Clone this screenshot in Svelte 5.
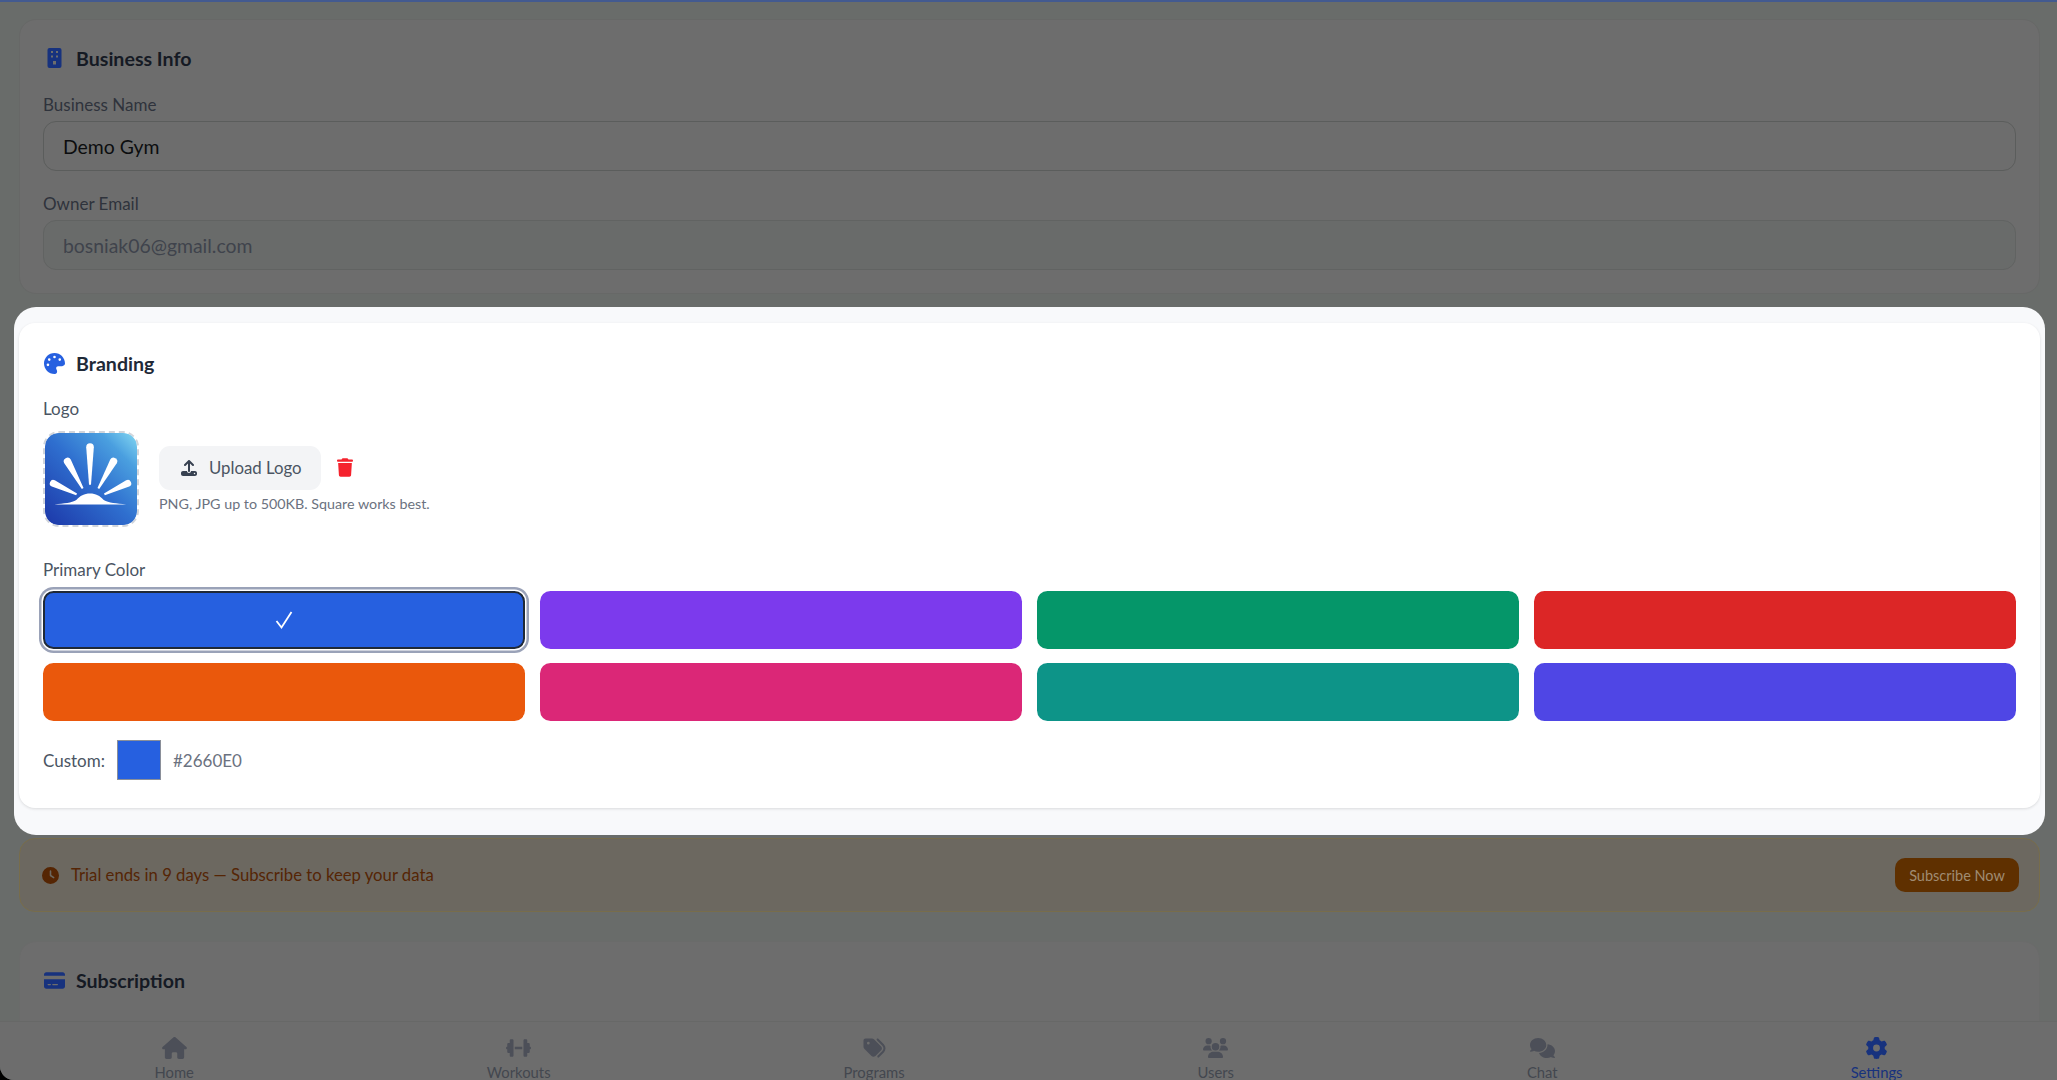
<script lang="ts">
	const swatches = ['#2660e0', '#7c3aed', '#059669', '#dc2626', '#ea580c', '#db2777', '#0d9488', '#4f46e5'];

	const navItems = [
		{
			label: 'Home',
			box: '0 0 576 512',
			d: 'M575.8 255.5c0 18-15 32.1-32 32.1h-32l.7 160.2c0 2.7-.2 5.4-.5 8.1V472c0 22.1-17.9 40-40 40H456c-1.1 0-2.2 0-3.3-.1c-1.4 .1-2.8 .1-4.2 .1H416 392c-22.1 0-40-17.9-40-40V448 384c0-17.7-14.3-32-32-32H256c-17.7 0-32 14.3-32 32v64 24c0 22.1-17.9 40-40 40H160 128.1c-1.5 0-3-.1-4.5-.2c-1.2 .1-2.4 .2-3.6 .2H104c-22.1 0-40-17.9-40-40V360c0-.9 0-1.9 .1-2.8V287.6H32c-18 0-32-14-32-32.1c0-9 3-17 10-24L266.4 8c7-7 15-8 22-8s15 2 21 7L564.8 231.5c8 7 12 15 11 24z'
		},
		{
			label: 'Workouts',
			box: '0 0 640 512',
			d: 'M96 64c0-17.7 14.3-32 32-32h32c17.7 0 32 14.3 32 32V224v64V448c0 17.7-14.3 32-32 32H128c-17.7 0-32-14.3-32-32V384H64c-17.7 0-32-14.3-32-32V288c-17.7 0-32-14.3-32-32s14.3-32 32-32V160c0-17.7 14.3-32 32-32H96V64zm448 0v64h32c17.7 0 32 14.3 32 32v64c17.7 0 32 14.3 32 32s-14.3 32-32 32v64c0 17.7-14.3 32-32 32H544v64c0 17.7-14.3 32-32 32H480c-17.7 0-32-14.3-32-32V288 224 64c0-17.7 14.3-32 32-32h32c17.7 0 32 14.3 32 32zM416 224v64H224V224H416z'
		},
		{
			label: 'Programs',
			box: '0 0 512 512',
			d: 'M345 39.1L472.8 168.4c52.4 53 52.4 138.2 0 191.2L360.8 472.9c-9.3 9.4-24.5 9.5-33.9 .2s-9.5-24.5-.2-33.9L438.6 325.9c33.9-34.3 33.9-89.4 0-123.7L310.9 72.9c-9.3-9.4-9.2-24.6 .2-33.9s24.6-9.2 33.9 .2zM0 229.5V80C0 53.5 21.5 32 48 32H197.5c17 0 33.3 6.7 45.3 18.7l168 168c25 25 25 65.5 0 90.5L277.3 442.7c-25 25-65.5 25-90.5 0l-168-168C6.7 262.7 0 246.5 0 229.5zM144 144a32 32 0 1 0 -64 0 32 32 0 1 0 64 0z'
		},
		{
			label: 'Users',
			box: '0 0 640 512',
			d: 'M144 0a80 80 0 1 1 0 160A80 80 0 1 1 144 0zM512 0a80 80 0 1 1 0 160A80 80 0 1 1 512 0zM0 298.7C0 239.8 47.8 192 106.7 192h42.7c15.9 0 31 3.5 44.6 9.7c-1.3 7.2-1.9 14.7-1.9 22.3c0 38.2 16.8 72.5 43.3 96c-.2 0-.4 0-.7 0H21.3C9.6 320 0 310.4 0 298.7zM405.3 320c-.2 0-.4 0-.7 0c26.6-23.5 43.3-57.8 43.3-96c0-7.6-.7-15-1.9-22.3c13.6-6.3 28.7-9.7 44.6-9.7h42.7C592.2 192 640 239.8 640 298.7c0 11.8-9.6 21.3-21.3 21.3H405.3zM224 224a96 96 0 1 1 192 0 96 96 0 1 1 -192 0zM128 485.3C128 411.7 187.7 352 261.3 352H378.7C452.3 352 512 411.7 512 485.3c0 14.7-11.9 26.7-26.7 26.7H154.7c-14.7 0-26.7-11.9-26.7-26.7z'
		},
		{
			label: 'Chat',
			box: '0 0 640 512',
			d: 'M208 352c114.9 0 208-78.8 208-176S322.9 0 208 0S0 78.8 0 176c0 38.6 14.7 74.3 39.6 103.4c-3.5 9.4-8.7 17.7-14.2 24.7c-4.8 6.2-9.7 11-13.3 14.3c-1.8 1.6-3.3 2.9-4.3 3.7c-.5 .4-.9 .7-1.1 .8l-.2 .2 0 0 0 0C1 327.2-1.4 334.4 .8 340.9S9.1 352 16 352c21.8 0 43.8-5.6 62.1-12.5c9.2-3.5 17.8-7.4 25.3-11.4C134.1 343.3 169.8 352 208 352zM448 176c0 112.3-99.1 196.9-216.5 207C255.8 457.7 336.1 512 432 512c38.2 0 73.9-8.7 104.7-23.9c7.5 4 16 7.9 25.2 11.4c18.3 6.9 40.3 12.5 62.1 12.5c6.9 0 13.1-4.5 15.2-11.1c2.1-6.6-.2-13.8-5.8-17.9l0 0 0 0-.2-.2c-.2-.2-.6-.4-1.1-.8c-1-.8-2.5-2-4.3-3.7c-3.6-3.3-8.5-8.1-13.3-14.3c-5.5-7-10.7-15.4-14.2-24.7c24.9-29 39.6-64.7 39.6-103.4c0-92.8-84.9-168.9-192.6-175.5c.4 5.1 .6 10.3 .6 15.5z'
		},
		{
			label: 'Settings',
			active: true,
			box: '0 0 512 512',
			d: 'M495.9 166.6c3.2 8.7 .5 18.4-6.4 24.6l-43.3 39.4c1.1 8.3 1.7 16.8 1.7 25.4s-.6 17.1-1.7 25.4l43.3 39.4c6.9 6.2 9.6 15.9 6.4 24.6c-4.4 11.9-9.7 23.3-15.8 34.3l-4.7 8.1c-6.6 11-14 21.4-22.1 31.2c-5.9 7.2-15.7 9.6-24.5 6.8l-55.7-17.7c-13.4 10.3-28.2 18.9-44 25.4l-12.5 57.1c-2 9.1-9 16.3-18.2 17.8c-13.8 2.3-28 3.5-42.5 3.5s-28.7-1.2-42.5-3.5c-9.2-1.5-16.2-8.7-18.2-17.8l-12.5-57.1c-15.8-6.5-30.6-15.1-44-25.4L83.1 425.9c-8.8 2.8-18.6 .3-24.5-6.8c-8.1-9.8-15.5-20.2-22.1-31.2l-4.7-8.1c-6.1-11-11.4-22.4-15.8-34.3c-3.2-8.7-.5-18.4 6.4-24.6l43.3-39.4C64.6 273.1 64 264.6 64 256s.6-17.1 1.7-25.4L22.4 191.2c-6.9-6.2-9.6-15.9-6.4-24.6c4.4-11.9 9.7-23.3 15.8-34.3l4.7-8.1c6.6-11 14-21.4 22.1-31.2c5.9-7.2 15.7-9.6 24.5-6.8l55.7 17.7c13.4-10.3 28.2-18.9 44-25.4l12.5-57.1c2-9.1 9-16.3 18.2-17.8C227.3 1.2 241.5 0 256 0s28.7 1.2 42.5 3.5c9.2 1.5 16.2 8.7 18.2 17.8l12.5 57.1c15.8 6.5 30.6 15.1 44 25.4l55.7-17.7c8.8-2.8 18.6-.3 24.5 6.8c8.1 9.8 15.5 20.2 22.1 31.2l4.7 8.1c6.1 11 11.4 22.4 15.8 34.3zM256 336a80 80 0 1 0 0-160 80 80 0 1 0 0 160z'
		}
	];

	// tapered ray: wide rounded head at (x1,y1), narrow foot at (x2,y2)
	function ray(x1: number, y1: number, x2: number, y2: number, w: number) {
		const len = Math.hypot(x2 - x1, y2 - y1);
		const nx = (-(y2 - y1) / len) * w;
		const ny = ((x2 - x1) / len) * w;
		const fx = (-(y2 - y1) / len) * 1;
		const fy = ((x2 - x1) / len) * 1;
		return `M${x1 + nx} ${y1 + ny}A${w} ${w} 0 0 1 ${x1 - nx} ${y1 - ny}L${x2 - fx} ${y2 - fy}L${x2 + fx} ${y2 + fy}Z`;
	}

	const rays = [
		ray(46, 14.5, 46, 53, 3.9),
		ray(23, 29, 38.5, 56.7, 3.8),
		ray(70, 29, 54.5, 56.7, 3.8),
		ray(8.5, 51.5, 32.3, 62.7, 3.6),
		ray(84.5, 51.5, 60.7, 62.7, 3.6)
	];
</script>

<div class="page">
	<div class="topline"></div>

	<main class="content">
		<section class="card first">
			<h2 class="title">
				<svg class="title-icon building" viewBox="0 0 14 20" aria-hidden="true">
					<path fill-rule="evenodd" d="M2 0h10a2 2 0 0 1 2 2v16a2 2 0 0 1-2 2H2a2 2 0 0 1-2-2V2a2 2 0 0 1 2-2zM3.5 3v2h2V3zm5 0v2h2V3zm-5 4.5v2h2v-2zm5 0v2h2v-2zM5.5 13v3.5h3V13z" />
				</svg>
				Business Info
			</h2>
			<div class="field">
				<span class="label">Business Name</span>
				<div class="input">Demo Gym</div>
			</div>
			<div class="field">
				<span class="label">Owner Email</span>
				<div class="input readonly">bosniak06@gmail.com</div>
			</div>
		</section>

		<div class="spotlight">
			<section class="card branding">
				<h2 class="title">
					<svg class="title-icon palette" viewBox="0 0 512 512" aria-hidden="true">
						<path d="M512 256c0 .9 0 1.8 0 2.7c-.4 36.5-33.6 61.3-70.1 61.3H344c-26.5 0-48 21.5-48 48c0 3.4 .4 6.7 1 9.9c2.1 10.2 6.5 20 10.8 29.9c6.1 13.8 12.1 27.5 12.1 42c0 31.8-21.6 60.7-53.4 62c-3.5 .1-7 .2-10.6 .2C114.6 512 0 397.4 0 256S114.6 0 256 0S512 114.6 512 256zM128 288a32 32 0 1 0 -64 0 32 32 0 1 0 64 0zm0-96a32 32 0 1 0 0-64 32 32 0 1 0 0 64zM288 96a32 32 0 1 0 -64 0 32 32 0 1 0 64 0zm96 96a32 32 0 1 0 0-64 32 32 0 1 0 0 64z" />
					</svg>
					Branding
				</h2>
				<span class="label">Logo</span>
				<div class="logo-row">
					<div class="logo-frame">
						<svg class="logo" viewBox="0 0 94 94" aria-hidden="true">
							<defs>
								<linearGradient id="logo-bg" x1="0" y1="1" x2="1" y2="0">
									<stop offset="0" stop-color="#1c37a8" />
									<stop offset="0.5" stop-color="#2f6fcf" />
									<stop offset="0.8" stop-color="#4a9fdf" />
									<stop offset="1" stop-color="#84d8f2" />
								</linearGradient>
							</defs>
							<rect width="94" height="94" rx="13" fill="url(#logo-bg)" />
							{#each rays as d}
								<path {d} fill="#fff" />
							{/each}
							<path d="M9.5 73C20 72 27 71.5 32 68.5C36 64 40 61.7 46 61.7C52 61.7 56 64 60 68.5C65 71.5 73 72 83 73Z" fill="#fff" />
						</svg>
					</div>
					<div class="logo-side">
						<div class="logo-actions">
							<button class="upload">
								<svg class="upload-icon" viewBox="0 0 512 512" aria-hidden="true">
									<path d="M288 109.3V352c0 17.7-14.3 32-32 32s-32-14.3-32-32V109.3l-73.4 73.4c-12.5 12.5-32.8 12.5-45.3 0s-12.5-32.8 0-45.3l128-128c12.5-12.5 32.8-12.5 45.3 0l128 128c12.5 12.5 12.5 32.8 0 45.3s-32.8 12.5-45.3 0L288 109.3zM64 352H192c0 35.3 28.7 64 64 64s64-28.7 64-64H448c35.3 0 64 28.7 64 64v32c0 35.3-28.7 64-64 64H64c-35.3 0-64-28.7-64-64V416c0-35.3 28.7-64 64-64zM432 456a24 24 0 1 0 0-48 24 24 0 1 0 0 48z" />
								</svg>
								Upload Logo
							</button>
							<svg class="trash" viewBox="0 0 448 512" aria-hidden="true">
								<path d="M135.2 17.7L128 32H32C14.3 32 0 46.3 0 64S14.3 96 32 96H416c17.7 0 32-14.3 32-32s-14.3-32-32-32H320l-7.2-14.3C307.4 6.8 296.3 0 284.2 0H163.8c-12.1 0-23.2 6.8-28.6 17.7zM416 128H32L53.2 467c1.6 25.3 22.6 45 47.9 45H346.9c25.3 0 46.3-19.7 47.9-45L416 128z" />
							</svg>
						</div>
						<p class="hint">PNG, JPG up to 500KB. Square works best.</p>
					</div>
				</div>

				<span class="label primary">Primary Color</span>
				<div class="swatches">
					{#each swatches as color, i}
						<button class="swatch" class:selected={i === 0} style="background: {color}">
							{#if i === 0}
								<svg class="check" viewBox="0 0 20 20" aria-hidden="true">
									<path d="M2.5 11l5 6.5L17.5 2" />
								</svg>
							{/if}
						</button>
					{/each}
				</div>

				<div class="custom">
					<span class="custom-label">Custom:</span>
					<span class="custom-swatch"></span>
					<span class="custom-value">#2660E0</span>
				</div>
			</section>
		</div>

		<div class="trial">
			<div class="trial-text">
				<svg class="clock" viewBox="0 0 512 512" aria-hidden="true">
					<path d="M256 0a256 256 0 1 1 0 512A256 256 0 1 1 256 0zM232 120V256c0 8 4 15.5 10.7 20l96 64c11 7.4 25.9 4.4 33.3-6.7s4.4-25.9-6.7-33.3L280 243.2V120c0-13.3-10.7-24-24-24s-24 10.7-24 24z" />
				</svg>
				Trial ends in 9 days — Subscribe to keep your data
			</div>
			<button class="subscribe">Subscribe Now</button>
		</div>

		<section class="card last">
			<h2 class="title">
				<svg class="title-icon wallet" viewBox="0 0 576 512" aria-hidden="true">
					<path d="M64 32C28.7 32 0 60.7 0 96v32H576V96c0-35.3-28.7-64-64-64H64zM576 224H0V416c0 35.3 28.7 64 64 64H512c35.3 0 64-28.7 64-64V224zM112 352h64c8.8 0 16 7.2 16 16s-7.2 16-16 16H112c-8.8 0-16-7.2-16-16s7.2-16 16-16zm112 16c0-8.8 7.2-16 16-16H368c8.8 0 16 7.2 16 16s-7.2 16-16 16H240c-8.8 0-16-7.2-16-16z" />
				</svg>
				Subscription
			</h2>
		</section>
	</main>

	<nav class="tabs">
		{#each navItems as item}
			<div class="tab" class:active={item.active}>
				<svg class="tab-icon" viewBox={item.box} aria-hidden="true"><path d={item.d} /></svg>
				<span class="tab-label">{item.label}</span>
			</div>
		{/each}
	</nav>

	<div class="dim"></div>
</div>

<style>
	:global(body) {
		margin: 0;
		background: #000;
	}

	.page {
		position: relative;
		height: 100vh;
		display: flex;
		flex-direction: column;
		overflow: hidden;
		background: #696c6a;
		border-bottom-left-radius: 14px;
		font-family: Lato, "Liberation Sans", sans-serif;
		color: #1f2530;
	}

	.topline {
		flex: none;
		height: 2px;
		background: #435a90;
	}

	.content {
		flex: 1;
		min-height: 0;
		overflow: hidden;
		padding: 17px 17px 0 19px;
	}

	.dim {
		position: absolute;
		inset: 0;
		z-index: 10;
		backdrop-filter: blur(0.6px);
	}

	.card {
		background: #6d6d6d;
		border: 1px solid #676867;
		border-radius: 17px;
		padding: 23px;
	}

	.title {
		display: flex;
		align-items: center;
		gap: 11px;
		margin: 0;
		height: 32px;
		font-size: 19.6px;
		font-weight: 700;
		color: #151a24;
	}

	.title-icon {
		flex: none;
		width: 21px;
		height: 21px;
		margin-left: 1px;
		fill: #17327e;
	}

	.building {
		height: 20px;
	}

	.first .title {
		margin-top: -1px;
	}

	.field {
		margin-top: 20px;
	}

	.field + .field {
		margin-top: 22px;
	}

	.label {
		display: block;
		font-size: 17px;
		line-height: 22px;
		color: #2f333c;
	}

	.input {
		box-sizing: border-box;
		height: 50px;
		margin-top: 5px;
		padding: 0 19px;
		display: flex;
		align-items: center;
		font-size: 19.4px;
		color: #0c0d0f;
		border: 1px solid #5b5d5c;
		border-radius: 13px;
	}

	.readonly {
		color: #3f434c;
		background: #696b6a;
		border-color: #616362;
	}

	.spotlight {
		position: relative;
		z-index: 20;
		margin: 13px -5px 3px;
		padding: 16px 5px 27px;
		background: #f8f9fb;
		border-radius: 22px;
	}

	.branding {
		background: #fff;
		border: 0;
		border-radius: 16px;
		box-shadow: 0 1px 3px rgba(0, 0, 0, 0.12);
		padding: 24px 24px 28px;
	}

	.branding .title {
		color: #1f2937;
	}

	.branding .title-icon {
		fill: #2660e0;
	}

	.branding .label {
		margin-top: 19px;
		color: #4b5563;
	}

	.logo-row {
		display: flex;
		align-items: center;
		gap: 20px;
		margin-top: 11px;
	}

	.logo-frame {
		flex: none;
		box-sizing: border-box;
		width: 96px;
		height: 96px;
		border: 2px dashed #d1d5db;
		border-radius: 16px;
		overflow: hidden;
	}

	.logo {
		display: block;
		width: 92px;
		height: 92px;
	}

	.logo-side {
		display: flex;
		flex-direction: column;
		gap: 4px;
		padding-top: 1px;
	}

	.logo-actions {
		display: flex;
		align-items: center;
		gap: 16px;
	}

	.upload {
		display: flex;
		align-items: center;
		gap: 12px;
		height: 44px;
		padding: 0 19px 0 22px;
		border: 0;
		border-radius: 11px;
		background: #f3f4f6;
		font: inherit;
		font-size: 16.8px;
		color: #4b5563;
	}

	.upload-icon {
		width: 16px;
		height: 16px;
		fill: #374151;
	}

	.trash {
		width: 16px;
		height: 19px;
		fill: #f5222d;
	}

	.hint {
		margin: 0;
		font-size: 14.3px;
		line-height: 20px;
		color: #6b7280;
	}

	.branding .primary {
		margin-top: 31.6px;
	}

	.swatches {
		display: grid;
		grid-template-columns: repeat(4, 1fr);
		gap: 14.5px;
		margin-top: 10px;
	}

	.swatch {
		position: relative;
		box-sizing: border-box;
		display: flex;
		align-items: center;
		justify-content: center;
		height: 58px;
		padding: 0;
		border: 0;
		border-radius: 10.5px;
	}

	.selected {
		border: 2.5px solid #1f2937;
		box-shadow: 0 0 0 1.5px #fff, 0 0 0 4px #9aa2b8;
	}

	.check {
		width: 20px;
		height: 20px;
		fill: none;
		stroke: #fff;
		stroke-width: 1.8;
	}

	.custom {
		display: flex;
		align-items: center;
		gap: 12px;
		margin-top: 19px;
	}

	.custom-label {
		font-size: 17px;
		color: #4b5563;
	}

	.custom-swatch {
		box-sizing: border-box;
		width: 44px;
		height: 40px;
		background: #2660e0;
		border: 1px solid #8a8f99;
	}

	.custom-value {
		font-size: 17px;
		color: #6b7280;
	}

	.trial {
		box-sizing: border-box;
		display: flex;
		align-items: center;
		justify-content: space-between;
		height: 74px;
		padding: 0 20px 0 22px;
		background: #6c6860;
		border: 1px solid #786d4b;
		border-radius: 16px;
	}

	.trial-text {
		display: flex;
		align-items: center;
		gap: 12px;
		font-size: 16.7px;
		color: #552505;
	}

	.clock {
		width: 17px;
		height: 17px;
		fill: #552503;
	}

	.subscribe {
		height: 34px;
		width: 124px;
		padding: 0;
		border: 0;
		border-radius: 10px;
		background: #5f3000;
		font: inherit;
		font-size: 14.5px;
		color: #a08c72;
	}

	.last {
		margin-top: 29px;
		height: 200px;
		border-color: #6a6b6a;
	}

	.last .title {
		margin-top: -1px;
	}

	.tabs {
		flex: none;
		height: 59px;
		box-sizing: border-box;
		display: flex;
		justify-content: space-around;
		padding: 0 8px;
		background: #6d6d6d;
		border-top: 1px solid #676867;
		overflow: hidden;
	}

	.tab {
		display: flex;
		flex-direction: column;
		align-items: center;
		padding-top: 15px;
		font-size: 14.8px;
		line-height: 20px;
		color: #43474f;
	}

	.tab-icon {
		flex: none;
		width: 25px;
		height: 22px;
		fill: #4c4f58;
		margin-bottom: 3px;
	}

	.tab-label {
		flex: none;
	}

	.tab.active {
		color: #17327e;
	}

	.tab.active .tab-icon {
		fill: #17327e;
	}
</style>
